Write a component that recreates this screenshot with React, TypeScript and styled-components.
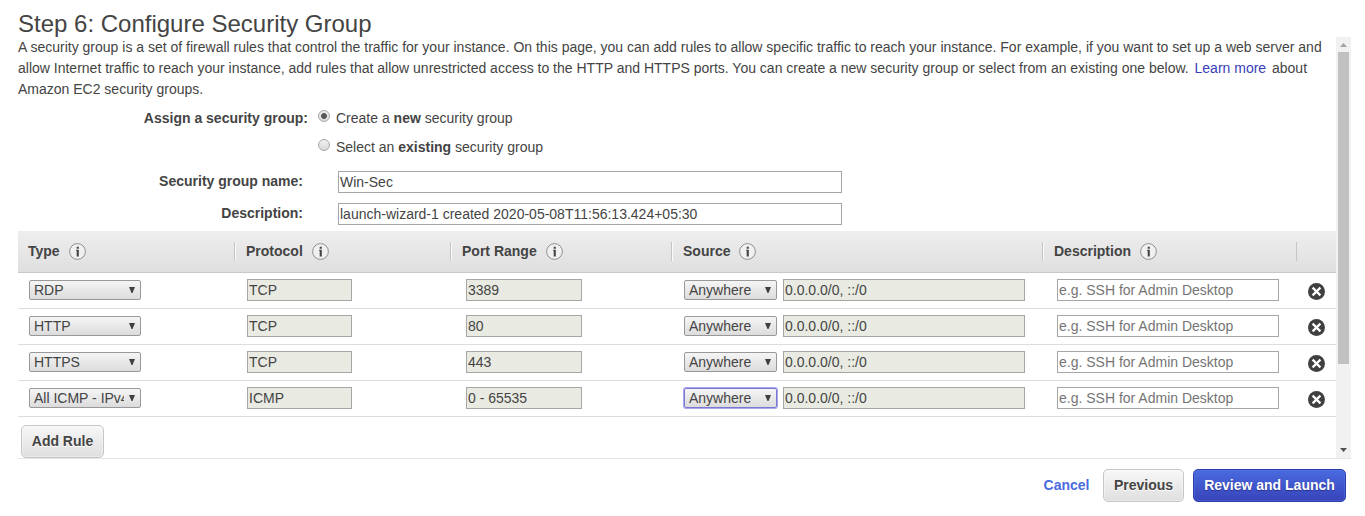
import React from "react";
import styled, { createGlobalStyle, css } from "styled-components";

const GlobalStyle = createGlobalStyle`
  * { box-sizing: border-box; }
  body {
    margin: 0;
    background: #fff;
    color: #444;
    font: 14px/21px "Liberation Sans", Arial, Helvetica, sans-serif;
    overflow: hidden;
  }
`;

const Page = styled.main`
  height: 516px;
  padding: 9px 14px 0 18px;
  display: flex;
  flex-direction: column;
`;

const Title = styled.h1`
  margin: 0;
  height: 28px;
  font-size: 24px;
  line-height: 30px;
  font-weight: 400;
`;

const Panel = styled.section`
  display: flex;
  height: 422px;
  border-bottom: 1px solid #e5e5e5;
`;

const Content = styled.div`
  width: 1318px;
  flex: none;
`;

const Intro = styled.p`
  margin: 0;
  height: 63px;
  white-space: nowrap;
`;

const Link = styled.a`
  color: #3840b8;
  text-decoration: none;
  margin: 0 2px;
`;

const FormLine = styled.div<{ $height: number; $top?: number }>`
  display: flex;
  align-items: flex-start;
  height: ${(p) => p.$height}px;
  padding-top: ${(p) => p.$top ?? 0}px;
`;

const Label = styled.label<{ $width: number; $gap: number }>`
  width: ${(p) => p.$width}px;
  margin-right: ${(p) => p.$gap}px;
  text-align: right;
  font-weight: 700;
`;

const Choice = styled.div`
  display: flex;
`;

const Radio = styled.span<{ $checked?: boolean }>`
  width: 12px;
  height: 12px;
  margin: 2px 6px 0 0;
  border: 1px solid #a6a6a6;
  border-radius: 50%;
  background: ${(p) =>
    p.$checked
      ? "radial-gradient(circle at 50% 50%, #5a5a5a 0 2.6px, transparent 3.3px), linear-gradient(#efefef, #dedede)"
      : "linear-gradient(#efefef, #dadada)"};
`;

const Field = styled.input<{ $width: number }>`
  display: block;
  width: ${(p) => p.$width}px;
  height: 22px;
  margin: 0;
  padding: 0 1px;
  border: 1px solid #a6a6a6;
  border-radius: 0;
  outline: 0;
  background: #fff;
  color: #444;
  font: inherit;
  line-height: 20px;
  &:disabled {
    background: #e9ebe2;
    color: #444;
    opacity: 1;
  }
  &::placeholder {
    color: #757575;
    opacity: 1;
  }
`;

const columns = css`
  display: grid;
  grid-template-columns: 218px 216px 221px 371px 254px 38px;
`;

const TableHead = styled.div`
  ${columns}
  height: 42px;
  background: linear-gradient(#eeeeee, #dfdfdf);
  border-bottom: 1px solid #c8c8c8;
  font-weight: 700;
`;

const HeadCell = styled.div<{ $last: boolean }>`
  display: flex;
  align-items: center;
  height: 19px;
  line-height: 19px;
  padding-left: 10px;
  margin: 11px 1px 11px 0;
  border-right: 1px solid #c4c4c4;
  box-shadow: ${(p) => (p.$last ? "none" : "1px 0 0 #fafafa")};
`;

const HeadText = styled.span`
  margin-right: 9px;
`;

const TableRow = styled.div`
  ${columns}
  height: 36px;
  padding-top: 6px;
  border-bottom: 1px solid #ddd;
`;

const Cell = styled.div<{ $inset: number }>`
  display: flex;
  gap: 6px;
  padding-left: ${(p) => p.$inset}px;
`;

const SelectBox = styled.div<{ $width: number; $focused?: boolean }>`
  display: flex;
  align-items: center;
  width: ${(p) => p.$width}px;
  height: 20px;
  margin-top: 1px;
  padding: 0 5px 0 4px;
  border: 1px solid ${(p) => (p.$focused ? "#7a78d2" : "#999")};
  border-radius: 2px;
  background: linear-gradient(#f5f5f5, #dcdcdc);
  box-shadow: ${(p) => (p.$focused ? "0 0 0 1px #a9a8ee" : "none")};
`;

const SelectText = styled.span`
  flex: 1;
  overflow: hidden;
  white-space: nowrap;
  line-height: 18px;
  margin-right: 5px;
`;

const IconButton = styled.button`
  display: block;
  width: 17px;
  height: 17px;
  margin: 4px 0 0 10px;
  padding: 0;
  border: 0;
  background: none;
  svg { display: block; }
`;

const Button = styled.button<{ $primary?: boolean; $width: number }>`
  width: ${(p) => p.$width}px;
  height: 33px;
  padding: 0;
  border: 1px solid ${(p) => (p.$primary ? "#2d3da6" : "#c6c6c6")};
  border-radius: 5px;
  background: ${(p) => (p.$primary ? "linear-gradient(#4a6be0, #3843b9)" : "linear-gradient(#f7f7f7, #dfdfdf)")};
  box-shadow: inset 0 0 0 1px ${(p) => (p.$primary ? "rgba(90, 125, 245, .35)" : "rgba(255, 255, 255, .35)")};
  color: ${(p) => (p.$primary ? "#fff" : "#444")};
  text-shadow: ${(p) => (p.$primary ? "0 1px 1px #27308c" : "0 1px 0 #fff")};
  font: inherit;
  font-weight: 700;
  white-space: nowrap;
`;

const AddArea = styled.div`
  padding: 8px 0 0 3px;
`;

const Footer = styled.footer`
  display: flex;
  justify-content: flex-end;
  gap: 9px;
  padding: 10px 5px 0 0;
`;

const Cancel = styled.a`
  margin: 6px 4.5px 0 0;
  color: #4a6be0;
  font-weight: 700;
`;

const Scrollbar = styled.div`
  display: flex;
  flex-direction: column;
  justify-content: space-between;
  width: 15px;
  height: 421px;
  background: #f1f1f1;
  svg { display: block; }
`;

const Thumb = styled.div`
  width: 11px;
  height: 312px;
  margin: 0 2px auto;
  background: #c1c1c1;
`;

const InfoIcon = () => (
  <svg width="17" height="17" viewBox="0 0 17 17">
    <circle cx="8.5" cy="8.5" r="7.9" fill="#f0f0f0" stroke="#8e8e8e" strokeWidth="1" />
    <path d="M7.7 3.7h2.1v2.1H7.7zM7.2 6.8h2.6v6.7H7.7V8h-.5z" fill="#444" />
  </svg>
);

const RemoveIcon = () => (
  <svg width="17" height="17" viewBox="0 0 17 17">
    <circle cx="8.5" cy="8.5" r="8.5" fill="#404040" />
    <path d="M4.6 4.6l7.8 7.8M12.4 4.6l-7.8 7.8" stroke="#fff" strokeWidth="2.2" />
  </svg>
);

const Select = ({ value, width, focused }: { value: string; width: number; focused?: boolean }) => (
  <SelectBox $width={width} $focused={focused}>
    <SelectText>{value}</SelectText>
    <svg width="6" height="6" viewBox="0 0 6 6">
      <path d="M0 0h6L3.5 6h-1z" fill="#404040" />
    </svg>
  </SelectBox>
);

const rules = [
  { type: "RDP", protocol: "TCP", port: "3389" },
  { type: "HTTP", protocol: "TCP", port: "80" },
  { type: "HTTPS", protocol: "TCP", port: "443" },
  { type: "All ICMP - IPv4", protocol: "ICMP", port: "0 - 65535", focused: true },
];

const headings = ["Type", "Protocol", "Port Range", "Source", "Description"];

export default function App() {
  return (
    <Page>
      <GlobalStyle />
      <Title>Step 6: Configure Security Group</Title>
      <Panel>
        <Content>
          <Intro>
            A security group is a set of firewall rules that control the traffic for your instance. On this page, you can
            add rules to allow specific traffic to reach your instance. For example, if you want to set up a web server and
            <br />
            allow Internet traffic to reach your instance, add rules that allow unrestricted access to the HTTP and HTTPS
            ports. You can create a new security group or select from an existing one below. <Link>Learn more</Link> about
            <br />
            Amazon EC2 security groups.
          </Intro>
          <FormLine $height={37} $top={8}>
            <Label as="div" $width={290} $gap={10}>
              Assign a security group:
            </Label>
            <Choice>
              <Radio $checked />
              <span>
                Create a <b>new</b> security group
              </span>
            </Choice>
          </FormLine>
          <FormLine $height={34}>
            <Label as="div" $width={290} $gap={10} />
            <Choice>
              <Radio />
              <span>
                Select an <b>existing</b> security group
              </span>
            </Choice>
          </FormLine>
          <FormLine $height={32}>
            <Label $width={285} $gap={35}>Security group name:</Label>
            <Field $width={504} defaultValue="Win-Sec" />
          </FormLine>
          <FormLine $height={28}>
            <Label $width={285} $gap={35}>Description:</Label>
            <Field $width={504} defaultValue="launch-wizard-1 created 2020-05-08T11:56:13.424+05:30" />
          </FormLine>
          <TableHead>
            {headings.map((name, i) => (
              <HeadCell key={name} $last={i === headings.length - 1}>
                <HeadText>{name}</HeadText>
                <InfoIcon />
              </HeadCell>
            ))}
          </TableHead>
          {rules.map((rule) => (
            <TableRow key={rule.type}>
              <Cell $inset={11}>
                <Select value={rule.type} width={112} />
              </Cell>
              <Cell $inset={11}>
                <Field $width={105} disabled defaultValue={rule.protocol} />
              </Cell>
              <Cell $inset={14}>
                <Field $width={116} disabled defaultValue={rule.port} />
              </Cell>
              <Cell $inset={11}>
                <Select value="Anywhere" width={93} focused={rule.focused} />
                <Field $width={242} disabled defaultValue="0.0.0.0/0, ::/0" />
              </Cell>
              <Cell $inset={13}>
                <Field $width={222} placeholder="e.g. SSH for Admin Desktop" />
              </Cell>
              <IconButton aria-label="Remove rule">
                <RemoveIcon />
              </IconButton>
            </TableRow>
          ))}
          <AddArea>
            <Button $width={83}>Add Rule</Button>
          </AddArea>
        </Content>
        <Scrollbar>
          <svg width="15" height="15" viewBox="0 0 15 15">
            <path d="M4 10h7L7.5 6z" fill="#a3a3a3" />
          </svg>
          <Thumb />
          <svg width="15" height="15" viewBox="0 0 15 15">
            <path d="M4 5h7L7.5 9z" fill="#505050" />
          </svg>
        </Scrollbar>
      </Panel>
      <Footer>
        <Cancel>Cancel</Cancel>
        <Button $width={81}>Previous</Button>
        <Button $width={153} $primary>
          Review and Launch
        </Button>
      </Footer>
    </Page>
  );
}
